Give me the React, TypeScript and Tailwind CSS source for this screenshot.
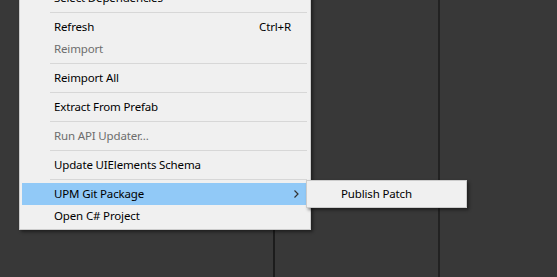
import React from 'react';

type Item =
  | { sep: true }
  | { label: string; shortcut?: string; disabled?: boolean; active?: boolean; submenu?: boolean };

const items: Item[] = [
  { label: 'Select Dependencies' },
  { sep: true },
  { label: 'Refresh', shortcut: 'Ctrl+R' },
  { label: 'Reimport', disabled: true },
  { sep: true },
  { label: 'Reimport All' },
  { sep: true },
  { label: 'Extract From Prefab' },
  { sep: true },
  { label: 'Run API Updater...', disabled: true },
  { sep: true },
  { label: 'Update UIElements Schema' },
  { sep: true },
  { label: 'UPM Git Package', active: true, submenu: true },
  { label: 'Open C# Project' },
];

function Chevron() {
  return (
    <svg width="5" height="8" viewBox="0 0 5 8" className="shrink-0">
      <path d="M0.5 0.5 L4 4 L0.5 7.5" fill="none" stroke="#333" strokeWidth="1.2" />
    </svg>
  );
}

function MenuRow({ item }: { item: Item }) {
  if ('sep' in item) {
    return (
      <div className="py-[3px] pl-[28px] pr-px">
        <div className="h-px bg-[#d7d7d7]" />
      </div>
    );
  }
  return (
    <div
      className={`flex h-[22px] items-center pl-[32px] pr-[9px] ${item.active ? 'bg-[#91c9f7]' : ''} ${
        item.disabled ? 'text-[#6d6d6d]' : 'text-black'
      }`}
    >
      <span className="flex-1">{item.label}</span>
      {item.shortcut && <span className="mr-[8px]">{item.shortcut}</span>}
      {item.submenu && <Chevron />}
    </div>
  );
}

export default function App() {
  return (
    <div
      className="relative flex h-[277px] w-[557px] overflow-hidden bg-[#383838] text-[11.5px] tracking-[-0.15px]"
      style={{ fontFamily: '"Segoe UI", "Noto Sans", sans-serif' }}
    >
      {/* editor panels behind the menu */}
      <div className="w-[273px]" />
      <div className="w-[2px] bg-[#1c1c1c]" />
      <div className="w-[163px]" />
      <div className="w-[2px] bg-[#222222]" />
      <div className="flex-1" />

      {/* context menu */}
      <div className="absolute left-[19px] top-[-16px] w-[292px] border border-[#cccccc] bg-[#f0f0f0] p-[2px] shadow-[2px_2px_3px_rgba(0,0,0,0.45)]">
        {items.map((item, i) => (
          <MenuRow key={i} item={item} />
        ))}
      </div>

      {/* submenu */}
      <div className="absolute left-[306px] top-[180px] w-[161px] border border-[#cccccc] bg-[#f0f0f0] p-[2px] shadow-[2px_2px_3px_rgba(0,0,0,0.45)]">
        <div className="flex h-[22px] items-center pl-[32px] text-black">Publish Patch</div>
      </div>
    </div>
  );
}
